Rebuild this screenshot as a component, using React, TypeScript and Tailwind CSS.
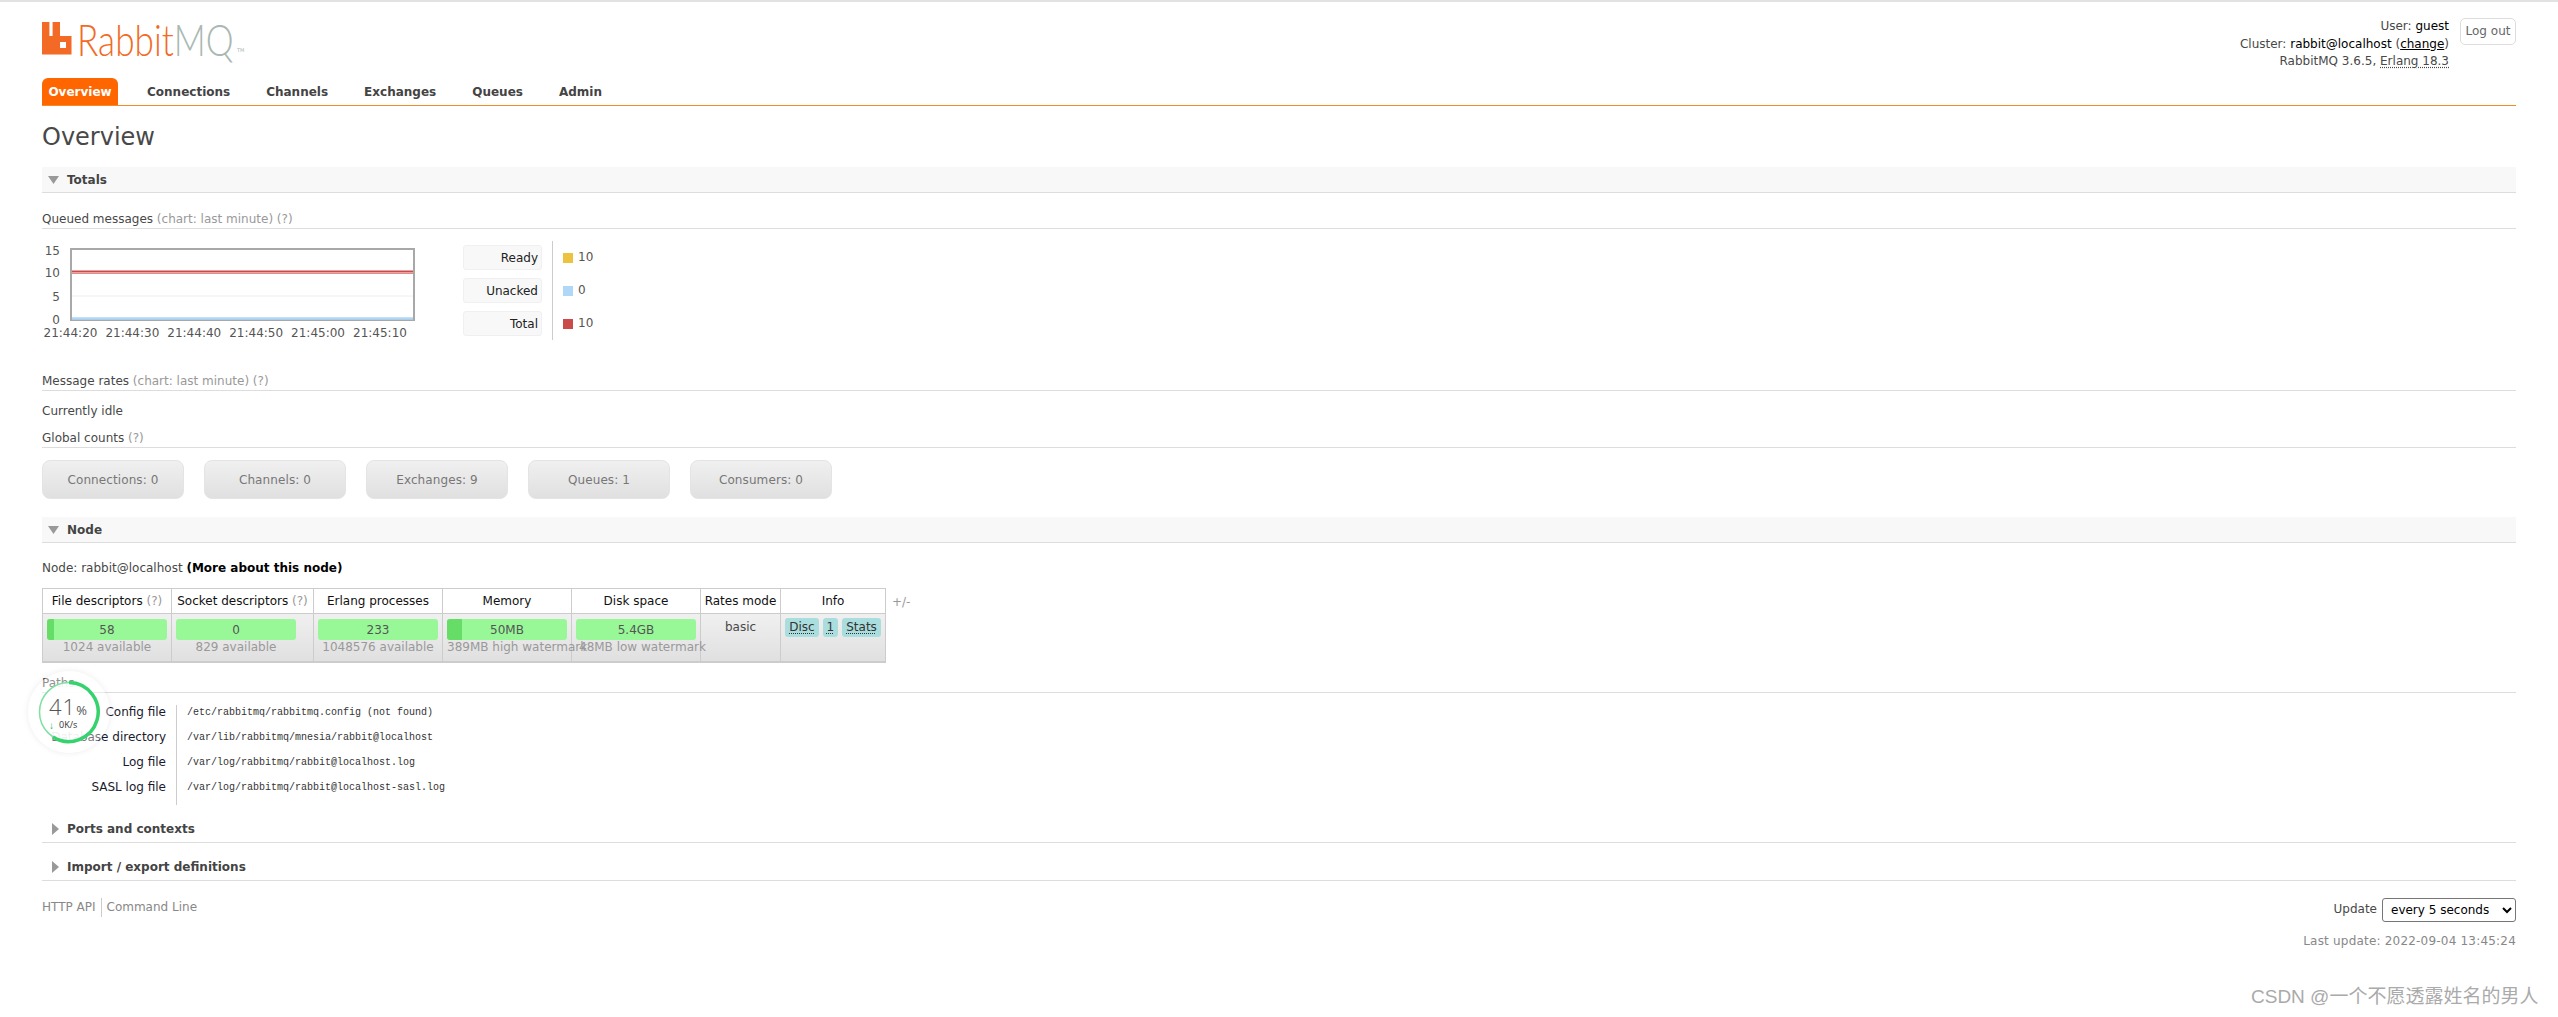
import React from "react";

const stats = ["Connections: 0", "Channels: 0", "Exchanges: 9", "Queues: 1", "Consumers: 0"];
const tabs = ["Connections", "Channels", "Exchanges", "Queues", "Admin"];
const times = ["21:44:20", "21:44:30", "21:44:40", "21:44:50", "21:45:00", "21:45:10"];
const legend = [
  { label: "Ready", value: "10", swatch: "bg-[#edc240]" },
  { label: "Unacked", value: "0", swatch: "bg-[#afd8f8]" },
  { label: "Total", value: "10", swatch: "bg-[#cb4b4b]" },
];
const paths = [
  ["Config file", "/etc/rabbitmq/rabbitmq.config (not found)"],
  ["Database directory", "/var/lib/rabbitmq/mnesia/rabbit@localhost"],
  ["Log file", "/var/log/rabbitmq/rabbit@localhost.log"],
  ["SASL log file", "/var/log/rabbitmq/rabbit@localhost-sasl.log"],
];

function Q() {
  return <span className="text-[#999]">(?)</span>;
}

function Down() {
  return (
    <svg width="11" height="8" viewBox="0 0 11 8" className="block shrink-0">
      <path d="M0 0H11L5.5 8Z" fill="#999" />
    </svg>
  );
}

function Right() {
  return (
    <svg width="7" height="12" viewBox="0 0 7 12" className="block shrink-0">
      <path d="M0 0L7 6L0 12Z" fill="#999" />
    </svg>
  );
}

function SectionBar({ title }: { title: string }) {
  return (
    <div className="h-[26px] bg-[#f8f8f8] border-b border-[#ddd] flex items-center pl-[6px]">
      <Down />
      <span className="ml-[8px] mt-[2px] font-bold text-[#444]">{title}</span>
    </div>
  );
}

function Closed({ title }: { title: string }) {
  return (
    <div className="h-[38px] border-b border-[#ddd] flex items-end pb-[4px] pl-[10px]">
      <div className="mb-[3px]">
        <Right />
      </div>
      <span className="ml-[8px] font-bold text-[#444]">{title}</span>
    </div>
  );
}

function Sub({ className, children }: { className: string; children: React.ReactNode }) {
  return <div className={`border-b border-[#ddd] flex items-end text-[#484848] ${className}`}>{children}</div>;
}

function Bar({ value, fill, sub, subClass }: { value: string; fill: string; sub: string; subClass?: string }) {
  return (
    <div className="w-[120px] ml-[4px]">
      <div className="relative h-[21px] rounded-[3px] bg-[#98f898] overflow-hidden text-center text-[#555] leading-[22px]">
        <div className={`absolute left-0 top-0 h-full bg-[#66dd66] ${fill}`} />
        <span className="relative">{value}</span>
      </div>
      <div className={`text-[#999] whitespace-nowrap text-center leading-[15px] ${subClass ?? ""}`}>{sub}</div>
    </div>
  );
}

function Th({ className, children }: { className: string; children: React.ReactNode }) {
  return (
    <div className={`h-[25px] pt-[2px] bg-white border-r border-b border-[#ccc] flex items-center justify-center text-[#111] whitespace-nowrap last:border-r-0 ${className}`}>
      {children}
    </div>
  );
}

function Td({ className, children }: { className: string; children?: React.ReactNode }) {
  return <div className={`h-[47px] border-r border-[#ccc] pt-[5px] ${className}`}>{children}</div>;
}

function Tag({ children }: { children: React.ReactNode }) {
  return (
    <span className="h-[19px] px-[4px] rounded-[3px] bg-[#aadddd] text-[#333] leading-[18px] underline decoration-dotted underline-offset-2">
      {children}
    </span>
  );
}

function Logo() {
  return (
    <div className="flex items-start">
      <svg width="30" height="33" viewBox="0 0 30 33" className="block mt-[2px] shrink-0">
        <path
          fillRule="evenodd"
          d="M0 0H7.4V14H10.6V0H18V14H29.5V32.5H0ZM18 20V26H24V20Z"
          fill="#f26a25"
        />
      </svg>
      <div className="ml-[5px] w-[158px] mt-[-6px]">
        <span className="inline-block origin-left scale-x-[0.8] text-[44px] leading-[50px] font-['Lato',sans-serif] font-light whitespace-nowrap">
          <span className="text-[#f26a25]">Rabbit</span>
          <span className="text-[#a9b8b2]">MQ</span>
        </span>
      </div>
      <span className="text-[5px] leading-[5px] mt-[28px] ml-[2px] text-[#a9b8b2]">TM</span>
    </div>
  );
}

function Chart() {
  return (
    <svg width="390" height="102" viewBox="0 0 390 102" className="block shrink-0" fontSize="12" fill="#555">
      <rect x="29" y="8" width="343" height="71" fill="#fff" stroke="#a8a8a8" strokeWidth="2" />
      <line x1="30" x2="371" y1="55" y2="55" stroke="#eee" />
      <line x1="30" x2="371" y1="32.5" y2="32.5" stroke="#e88a80" strokeWidth="1" />
      <line x1="30" x2="371" y1="30.5" y2="30.5" stroke="#cb4b4b" strokeWidth="2" />
      <line x1="30" x2="371" y1="77.5" y2="77.5" stroke="#afd8f8" strokeWidth="2.5" />
      {[["15", 14], ["10", 36], ["5", 60], ["0", 83]].map(([t, y]) => (
        <text key={t} x="18" y={y} textAnchor="end">
          {t}
        </text>
      ))}
      {times.map((t, i) => (
        <text key={t} x={1.5 + i * 61.9} y="96">
          {t}
        </text>
      ))}
    </svg>
  );
}

export default function App() {
  return (
    <div className="relative h-[1017px] overflow-hidden bg-white text-[12px] leading-[17.5px] text-[#484848] font-['DejaVu_Sans','Noto_Sans_CJK_SC',sans-serif]">
      <div className="h-[2px] bg-[#e2e2e2]" />
      <div className="px-[42px]">
        <header className="h-[76px] flex justify-between items-start">
          <div className="pt-[18px]">
            <Logo />
          </div>
          <div className="flex items-start">
            <div className="pt-[16px] text-right">
              <div>
                User: <span className="text-black">guest</span>
              </div>
              <div>
                Cluster: <span className="text-black">rabbit@localhost</span> (<span className="text-black underline">change</span>)
              </div>
              <div>
                RabbitMQ 3.6.5, <span className="underline decoration-dotted underline-offset-2">Erlang 18.3</span>
              </div>
            </div>
            <button className="ml-[11px] mt-[16px] w-[56px] h-[27px] rounded-[5px] border border-[#ddd] bg-white text-[#666]">Log out</button>
          </div>
        </header>

        <nav className="h-[28px] border-b border-[#f28c28] flex items-start font-bold">
          <div className="h-[27px] pt-[2px] w-[76px] rounded-t-[6px] bg-[#ff6600] text-white flex items-center justify-center mr-[22px]">Overview</div>
          {tabs.map((t) => (
            <div key={t} className="h-[27px] pt-[2px] px-[7px] mr-[22px] flex items-center text-[#444]">
              {t}
            </div>
          ))}
        </nav>

        <h1 className="h-[61px] pt-[3px] flex items-center text-[24px] font-normal text-[#484848]">Overview</h1>

        <SectionBar title="Totals" />

        <Sub className="h-[36px]">
          <span>
            Queued messages <span className="text-[#999]">(chart: last minute) (?)</span>
          </span>
        </Sub>

        <div className="h-[143px] pt-[12px] flex items-start">
          <Chart />
          <div className="ml-[31px] h-[99px] flex">
            <div className="w-[90px] pt-[4px] flex flex-col gap-[8px] border-r border-[#ccc] pr-[10px]">
              {legend.map((l) => (
                <div key={l.label} className="h-[25px] pt-[2px] rounded-[3px] bg-[#f8f8f8] border border-[#f0f0f0] flex items-center justify-end pr-[3px] text-[#222]">
                  {l.label}
                </div>
              ))}
            </div>
            <div className="pl-[10px] pt-[4px] flex flex-col gap-[8px]">
              {legend.map((l) => (
                <div key={l.label} className="h-[25px] flex items-center text-[#555]">
                  <span className={`w-[10px] h-[10px] mr-[5px] ${l.swatch}`} />
                  <span className="mt-[1px]">{l.value}</span>
                </div>
              ))}
            </div>
          </div>
        </div>

        <Sub className="h-[19px]">
          <span>
            Message rates <span className="text-[#999]">(chart: last minute) (?)</span>
          </span>
        </Sub>
        <div className="h-[38px] pt-[12px]">Currently idle</div>
        <Sub className="h-[19px]">
          <span>
            Global counts <Q />
          </span>
        </Sub>

        <div className="mt-[12px] flex gap-[20px]">
          {stats.map((s) => (
            <div key={s} className="w-[142px] h-[39px] pt-[2px] rounded-[8px] border border-[#e4e4e4] bg-linear-to-b from-[#f0f0f0] to-[#e0e0e0] flex items-center justify-center text-[#777] tracking-[0.1px]">
              {s}
            </div>
          ))}
        </div>

        <div className="mt-[18px]">
          <SectionBar title="Node" />
        </div>

        <div className="h-[45px] pt-[7px] flex items-center">
          <span>
            Node: rabbit@localhost <b className="text-black">(More about this node)</b>
          </span>
        </div>

        <div className="flex items-start">
          <div className="w-[844px] border border-[#ccc] border-b-2">
            <div className="flex">
              <Th className="w-[129px]">
                <span>
                  File descriptors <Q />
                </span>
              </Th>
              <Th className="w-[142px]">
                <span>
                  Socket descriptors <Q />
                </span>
              </Th>
              <Th className="w-[129px]">Erlang processes</Th>
              <Th className="w-[129px]">Memory</Th>
              <Th className="w-[129px]">Disk space</Th>
              <Th className="w-[80px]">Rates mode</Th>
              <Th className="flex-1">Info</Th>
            </div>
            <div className="flex bg-linear-to-b from-[#f0f0f0] to-[#e0e0e0]">
              <Td className="w-[129px]">
                <Bar value="58" fill="w-[7px]" sub="1024 available" />
              </Td>
              <Td className="w-[142px]">
                <Bar value="0" fill="w-0" sub="829 available" />
              </Td>
              <Td className="w-[129px]">
                <Bar value="233" fill="w-0" sub="1048576 available" />
              </Td>
              <Td className="w-[129px]">
                <Bar value="50MB" fill="w-[15px]" sub="389MB high watermark" />
              </Td>
              <Td className="w-[129px]">
                <Bar value="5.4GB" fill="w-0" sub="48MB low watermark" subClass="ml-[3px]" />
              </Td>
              <Td className="w-[80px] text-center">basic</Td>
              <div className="flex-1 h-[47px] pt-[4px] flex justify-center gap-[4px]">
                <Tag>Disc</Tag>
                <Tag>1</Tag>
                <Tag>Stats</Tag>
              </div>
            </div>
          </div>
          <span className="ml-[6px] mt-[6px] text-[#999]">+/-</span>
        </div>

        <Sub className="h-[30px]">Paths</Sub>

        <div className="pt-[12px]">
          {paths.map(([k, v]) => (
            <div key={k} className="h-[25px] flex items-start leading-[15px]">
              <div className="w-[124px] text-right text-[#1a1a2e]">{k}</div>
              <div className="w-[11px] h-full border-r border-[#ccc]" />
              <div className="pl-[10px] text-[10px] text-[#333] font-['Liberation_Mono',monospace]">{v}</div>
            </div>
          ))}
        </div>

        <Closed title="Ports and contexts" />
        <Closed title="Import / export definitions" />

        <footer className="flex justify-between items-start">
          <div className="mt-[17px] flex items-center h-[19px] text-[#888]">
            <span className="pr-[5px] border-r border-[#ccc] h-[19px] leading-[18px]">HTTP API</span>
            <span className="pl-[5px]">Command Line</span>
          </div>
          <div className="mt-[17px] text-right">
            <div className="flex items-center justify-end">
              <span>Update</span>
              <select defaultValue="5" className="ml-[5px] w-[134px] h-[24px] rounded-[3px] border border-[#767676] bg-white text-black pl-[4px]">
                <option value="5">every 5 seconds</option>
              </select>
            </div>
            <div className="mt-[11px] text-[#888] tracking-[0.2px]">Last update: 2022-09-04 13:45:24</div>
          </div>
        </footer>
      </div>

      <div className="absolute left-[28px] top-[671px] w-[82px] h-[82px] rounded-full bg-white/40 shadow-[0_0_6px_rgba(0,0,0,0.08)]">
        <svg width="64" height="64" viewBox="0 0 64 64" className="absolute left-[9px] top-[9px]">
          <circle cx="32" cy="32" r="29.5" fill="#ffffff" fillOpacity="0.88" stroke="#7fe0a4" strokeWidth="1.5" />
          <path d="M32 2.5A29.5 29.5 0 1 1 16 57" fill="none" stroke="#36d26e" strokeWidth="3.5" />
        </svg>
        <div className="absolute left-[21px] top-[23px] flex items-baseline text-[#555] font-['Open_Sans',sans-serif]">
          <span className="text-[22px] leading-[24px] font-light tracking-[1px]">41</span>
          <span className="text-[13px] leading-[12px]">%</span>
        </div>
        <div className="absolute left-[21px] top-[49px] flex items-center text-[9px] leading-[10px] text-[#333] font-['Open_Sans',sans-serif]">
          <span className="text-[#22b455] font-bold text-[10px]">↓</span>
          <span className="ml-[5px]">0K/s</span>
        </div>
      </div>

      <div className="absolute left-[2251px] top-[985px] text-[19px] leading-[24px] text-[#aaa] whitespace-nowrap font-['Liberation_Sans','Noto_Sans_CJK_SC',sans-serif]">
        CSDN @一个不愿透露姓名的男人
      </div>
    </div>
  );
}
